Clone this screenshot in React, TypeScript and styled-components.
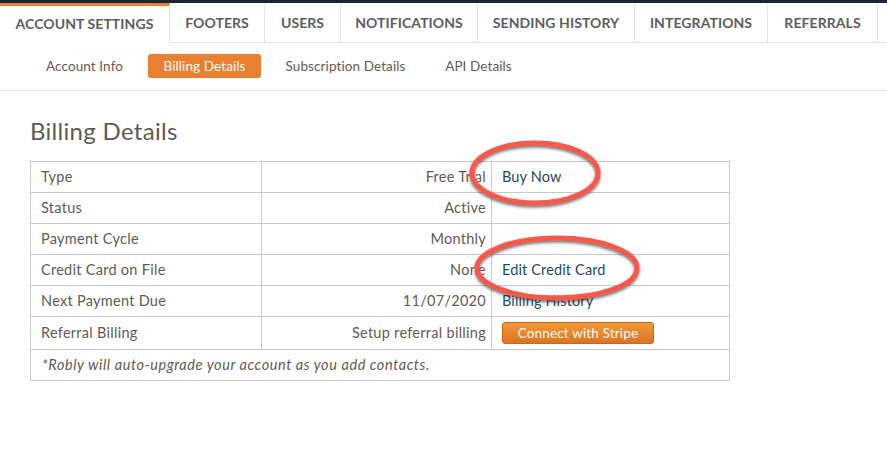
import styled, { createGlobalStyle } from 'styled-components'

const GlobalStyle = createGlobalStyle`
  html, body {
    margin: 0;
    padding: 0;
    background: #fff;
  }
  body {
    font-family: 'Lato', 'Open Sans', sans-serif;
    color: #5f5b55;
  }
`

const Page = styled.div`
  position: relative;
  width: 887px;
  height: 461px;
  overflow: hidden;
  border-top: 3px solid #1b2536;
  box-sizing: border-box;
`

const Tabs = styled.div`
  display: flex;
  height: 39px;
  border-bottom: 1px solid #e4e4e1;
`

const Tab = styled.div<{ $active?: boolean; $w: number }>`
  width: ${p => p.$w}px;
  box-sizing: border-box;
  display: flex;
  align-items: center;
  justify-content: center;
  font-size: 14px;
  font-weight: 700;
  letter-spacing: 0.07px;
  color: #5c5d62;
  border-right: 1px solid #e4e4e1;
  ${p =>
    p.$active
      ? `
    background: #fff;
    border-top: 3px solid #e98031;
    height: 40px;
    padding-bottom: 3px;
    margin-bottom: -1px;
  `
      : ''}
`

const SubNav = styled.div`
  display: flex;
  align-items: center;
  height: 45px;
  padding: 0 0 2px 30px;
  border-bottom: 1px solid #e6e6e6;
`

const SubLink = styled.div<{ $active?: boolean; $w: number; $mr: number }>`
  width: ${p => p.$w}px;
  height: 24px;
  margin-right: ${p => p.$mr}px;
  display: flex;
  align-items: center;
  justify-content: center;
  border-radius: 3px;
  font-size: 13.5px;
  letter-spacing: 0.1px;
  color: ${p => (p.$active ? '#fff' : '#5f5b55')};
  background: ${p => (p.$active ? '#e98031' : 'transparent')};
`

const Content = styled.div`
  padding: 24px 30px 0;
`

const Heading = styled.h1`
  margin: 0 0 15px;
  font-size: 24px;
  line-height: 31px;
  font-weight: 400;
  letter-spacing: 0.3px;
  color: #5f5b55;
`

const Table = styled.table`
  width: 700px;
  border-collapse: collapse;
  table-layout: fixed;
  font-size: 14.5px;
  letter-spacing: 0.28px;
  border: 1px solid #c8c8c8;
`

const Row = styled.tr<{ $h?: number }>`
  height: ${p => p.$h ?? 31}px;
`

const Cell = styled.td<{ $right?: boolean; $w?: number }>`
  box-sizing: border-box;
  ${p => (p.$w ? `width: ${p.$w}px;` : '')}
  padding: 0 5px 2px 10px;
  border: 1px solid #c8c8c8;
  text-align: ${p => (p.$right ? 'right' : 'left')};
  color: #5f5b55;
`

const ActionLink = styled.a`
  color: #1f4a5f;
  letter-spacing: 0.14px;
`

const StripeButton = styled.button`
  display: block;
  width: 152px;
  height: 22px;
  margin-top: 2px;
  padding: 0;
  border: 1px solid #cc6420;
  border-radius: 3px;
  background: linear-gradient(#f09a35, #de7324);
  color: #fff;
  font-family: inherit;
  font-size: 13.5px;
  letter-spacing: 0.15px;
`

const Note = styled.td`
  padding: 0 11px 2px;
  border: 1px solid #c8c8c8;
  font-style: italic;
  letter-spacing: 0.57px;
  color: #5f5b55;
`

const Annotations = styled.svg`
  position: absolute;
  left: 0;
  top: -3px;
  pointer-events: none;
`

const tabs = [
  { label: 'ACCOUNT SETTINGS', w: 170, active: true },
  { label: 'FOOTERS', w: 95 },
  { label: 'USERS', w: 76 },
  { label: 'NOTIFICATIONS', w: 137 },
  { label: 'SENDING HISTORY', w: 157 },
  { label: 'INTEGRATIONS', w: 133 },
  { label: 'REFERRALS', w: 110 },
]

const subLinks = [
  { label: 'Account Info', w: 109, mr: 9 },
  { label: 'Billing Details', w: 113, mr: 4, active: true },
  { label: 'Subscription Details', w: 161, mr: 0 },
  { label: 'API Details', w: 105, mr: 0 },
]

const rows = [
  { name: 'Type', value: 'Free Trial', action: 'Buy Now' },
  { name: 'Status', value: 'Active' },
  { name: 'Payment Cycle', value: 'Monthly' },
  { name: 'Credit Card on File', value: 'None', action: 'Edit Credit Card' },
  { name: 'Next Payment Due', value: '11/07/2020', action: 'Billing History' },
]

export default function App() {
  return (
    <Page>
      <GlobalStyle />
      <Tabs>
        {tabs.map(t => (
          <Tab key={t.label} $w={t.w} $active={t.active}>
            {t.label}
          </Tab>
        ))}
      </Tabs>
      <SubNav>
        {subLinks.map(l => (
          <SubLink key={l.label} $w={l.w} $mr={l.mr} $active={l.active}>
            {l.label}
          </SubLink>
        ))}
      </SubNav>
      <Content>
        <Heading>Billing Details</Heading>
        <Table>
          <tbody>
            {rows.map(r => (
              <Row key={r.name}>
                <Cell $w={231}>{r.name}</Cell>
                <Cell $w={230} $right>
                  {r.value}
                </Cell>
                <Cell>{r.action && <ActionLink>{r.action}</ActionLink>}</Cell>
              </Row>
            ))}
            <Row $h={33}>
              <Cell>Referral Billing</Cell>
              <Cell $right>Setup referral billing</Cell>
              <Cell>
                <StripeButton>Connect with Stripe</StripeButton>
              </Cell>
            </Row>
            <Row $h={31}>
              <Note colSpan={3}>*Robly will auto-upgrade your account as you add contacts.</Note>
            </Row>
          </tbody>
        </Table>
      </Content>
      <Annotations width="887" height="461" viewBox="0 0 887 461">
        <defs>
          <filter id="oval-shadow" x="-20%" y="-30%" width="140%" height="170%">
            <feDropShadow dx="0" dy="2" stdDeviation="1.5" floodColor="#222" floodOpacity="0.65" />
          </filter>
        </defs>
        <g fill="none" stroke="#f9594c" strokeWidth="5" filter="url(#oval-shadow)">
          <ellipse cx="535" cy="173" rx="63" ry="30" />
          <ellipse cx="557" cy="268" rx="80" ry="30" />
        </g>
      </Annotations>
    </Page>
  )
}
